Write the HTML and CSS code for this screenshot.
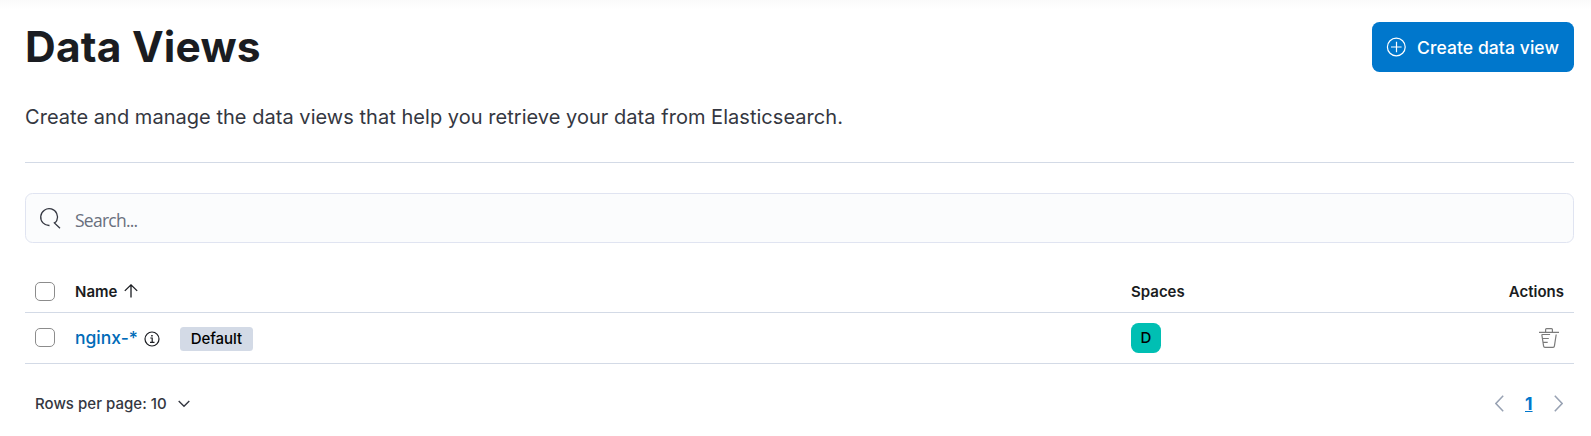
FILE: index.html
```html
<!DOCTYPE html>
<html lang="en">
<head>
<meta charset="utf-8">
<title>Data Views</title>
<link rel="stylesheet" href="styles.css">
</head>
<body>
<main class="page">
  <header class="header">
    <h1 class="title">Data Views</h1>
    <button class="create" type="button">
      <svg class="create-icon" width="20" height="20" viewBox="0 0 20 20"><circle cx="10.3" cy="10" r="8.9"/><path d="M10.5 4.7v10.6M5 10h10.6"/></svg>
      <span class="create-label">Create data view</span>
    </button>
  </header>
  <p class="description">Create and manage the data views that help you retrieve your data from Elasticsearch.</p>
  <div class="search">
    <svg class="search-icon" width="22" height="22" viewBox="0 0 22 22"><path d="M10.5 18.5A8.4 8.4 0 1 1 17.8 13.5Q17.2 14.9 15.4 15.9L21 21.2"/></svg>
    <span class="placeholder">Search...</span>
  </div>
  <section class="table">
    <div class="row head">
      <span class="checkbox"></span>
      <div class="name-cell"><span class="name-label">Name</span>
        <svg class="sort" width="14" height="14" viewBox="0 0 14 14"><path d="M7 13.5V1M.8 6.9 7 .9l6.2 6"/></svg>
      </div>
      <div class="space-cell">Spaces</div>
      <div class="action-cell">Actions</div>
    </div>
    <div class="row item">
      <span class="checkbox"></span>
      <div class="name-cell"><a class="link">nginx-*</a>
        <svg class="info" width="16" height="16" viewBox="0 0 16 16"><circle cx="8" cy="8" r="7"/><path d="M6.3 7H8.2v4.3M6 11.4h4.5"/><path class="dot" d="M7.2 4h1.5v1.5H7.2z"/></svg>
        <span class="badge">Default</span>
      </div>
      <div class="space-cell"><span class="avatar">D</span></div>
      <div class="action-cell">
        <svg class="trash" width="20" height="20" viewBox="0 0 20 20"><path d="M0 4.4h20M6.6 4.2V1.5q0-.9.9-.9h5q.9 0 .9.9v2.7M2.8 6.5l1.8 11.7q.2 1.2 1.3 1.2h8.2q1.1 0 1.3-1.2l1.8-11.7M2.8 6.5h8.3M4 10.5h5.8M4.5 14.4h4.2"/></svg>
      </div>
    </div>
  </section>
  <footer class="footer">
    <div class="per-page"><span>Rows per page: 10</span>
      <svg width="12" height="8" viewBox="0 0 12 8"><path d="M.7 1 6 6.3 11.3 1"/></svg>
    </div>
    <nav class="pager">
      <svg width="9" height="17" viewBox="0 0 9 17"><path d="M8.2.8.9 8.5l7.3 7.7"/></svg>
      <a class="current">1</a>
      <svg width="9" height="17" viewBox="0 0 9 17"><path d="M.8.8 8.1 8.5.8 16.2"/></svg>
    </nav>
  </footer>
</main>
</body>
</html>
```
FILE: styles.css
```css
* { box-sizing: border-box; }
body {
  margin: 0;
  height: 436px;
  background: linear-gradient(#fafafa, #fff 10px);
  font-family: Inter, sans-serif;
  color: #1a1c21;
}
svg { display: block; flex: none; fill: none; stroke: currentColor; }
.page { padding: 22px 17px 0 25px; }
.header { display: flex; justify-content: space-between; height: 50px; }
.title { margin: 0; font-size: 42.5px; line-height: 50px; font-weight: 700; letter-spacing: .2px; }
.create {
  display: flex;
  align-items: center;
  width: 202px;
  height: 50px;
  padding: 0 0 0 14px;
  gap: 11px;
  border: 0;
  border-radius: 7.5px;
  background: #0077cc;
  color: #fff;
  font: 500 17.5px/50px Inter, sans-serif;
  letter-spacing: .08px;
  white-space: nowrap;
}
.create-icon { stroke-width: 1.2; margin-top: -1px; }
.create-label { padding-top: 2px; line-height: 48px; }
.description {
  margin: 0;
  height: 91px;
  padding-top: 30px;
  border-bottom: 1px solid #d3dae6;
  color: #343741;
  font-size: 20px;
  line-height: 30px;
  letter-spacing: .035px;
}
.search {
  display: flex;
  align-items: center;
  height: 50px;
  margin-top: 30px;
  padding-left: 13px;
  gap: 14px;
  border: 1px solid #e0e4f1;
  border-radius: 7.5px;
  background: #fbfcfd;
  color: #343741;
}
.search-icon { stroke-width: 1.3; }
.placeholder { padding-top: 3px; color: #69707d; font: 17.5px/24px "Open Sans", sans-serif; letter-spacing: -.75px; }
.table { margin-top: 29px; }
.row {
  display: grid;
  grid-template-columns: 40px 1056px 1fr auto;
  align-items: center;
  padding: 0 10px;
  border-bottom: 1px solid #d3dae6;
}
.head { height: 41px; padding-bottom: 2px; font-size: 15px; font-weight: 600; }
.item { height: 51px; }
.checkbox { width: 20px; height: 19px; border: 1px solid #8c8c8c; border-radius: 5px; }
.item .checkbox { margin-bottom: 1px; }
.name-cell { display: flex; align-items: center; }
.sort { margin-left: 7px; stroke-width: 1.3; }
.link { padding-bottom: 2px; color: #006bb8; font-size: 17.5px; font-weight: 500; }
.info { margin-left: 6px; margin-top: 2px; stroke-width: 1.2; }
.dot { fill: currentColor; stroke: none; }
.badge {
  height: 24px;
  width: 73px;
  margin: 2px 0 0 20px;
  border-radius: 3.5px;
  background: #d3dae6;
  color: #000;
  font-size: 15px;
  line-height: 24px;
  font-weight: 500;
  text-align: center;
  letter-spacing: -.05px;
}
.avatar {
  display: block;
  width: 30px;
  height: 30px;
  border-radius: 7.5px;
  background: #00bfb3;
  color: #000;
  font-size: 15px;
  line-height: 30px;
  font-weight: 500;
  text-align: center;
}
.trash { margin-right: 5px; color: #7b7b7b; stroke-width: 1.2; }
.footer {
  display: flex;
  align-items: center;
  justify-content: space-between;
  height: 79px;
  padding: 0 11px 0 10px;
}
.per-page { display: flex; align-items: center; gap: 11px; color: #343741; font-size: 15px; font-weight: 500; letter-spacing: .03px; }
.per-page svg { stroke-width: 1.4; }
.pager { display: flex; align-items: center; gap: 20px; color: #98a2b3; }
.pager svg { stroke-width: 1.5; }
.current { width: 9px; margin-left: 1px; color: #0077cc; font-size: 17.5px; font-weight: 700; text-decoration: underline; }
```
